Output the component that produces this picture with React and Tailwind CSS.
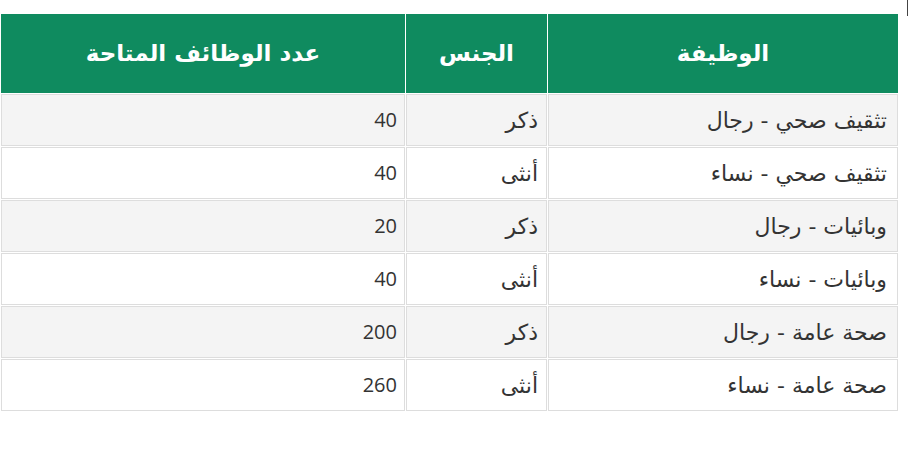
import React from "react";

const rows = [
  { job: "تثقيف صحي - رجال", gender: "ذكر", count: 40 },
  { job: "تثقيف صحي - نساء", gender: "أنثى", count: 40 },
  { job: "وبائيات - رجال", gender: "ذكر", count: 20 },
  { job: "وبائيات - نساء", gender: "أنثى", count: 40 },
  { job: "صحة عامة - رجال", gender: "ذكر", count: 200 },
  { job: "صحة عامة - نساء", gender: "أنثى", count: 260 },
];

const arabic = { fontFamily: '"DejaVu Sans", "Open Sans", sans-serif' };

export default function App() {
  return (
    <div
      className="relative w-[908px] h-[449px] bg-white pt-[13px]"
      style={{ fontFamily: '"Open Sans", "DejaVu Sans", sans-serif' }}
    >
      <div className="absolute right-0 top-0 w-px h-[16px] bg-[#444]" />
      <table dir="rtl" className="w-[899px] table-fixed border-separate border-spacing-px">
        <colgroup>
          <col className="w-[350px]" />
          <col className="w-[141px]" />
          <col className="w-[404px]" />
        </colgroup>
        <thead>
          <tr style={arabic}>
            <th className="h-[79px] bg-[#0f8b5f] text-white text-[23px] font-bold text-center">الوظيفة</th>
            <th className="h-[79px] bg-[#0f8b5f] text-white text-[23px] font-bold text-center">الجنس</th>
            <th className="h-[79px] bg-[#0f8b5f] text-white text-[23px] font-bold text-center">عدد الوظائف المتاحة</th>
          </tr>
        </thead>
        <tbody>
          {rows.map((r, i) => (
            <tr key={i} className={i % 2 === 0 ? "bg-[#f4f4f4]" : "bg-white"}>
              <td style={arabic} className="h-[52px] border border-[#dddddd] px-[10px] text-right text-[22px] text-[#333]">{r.job}</td>
              <td style={arabic} className="h-[52px] border border-[#dddddd] px-[8px] text-right text-[22px] text-[#333]">{r.gender}</td>
              <td className="h-[52px] border border-[#dddddd] px-[7px] text-right text-[20px] text-[#333]">{r.count}</td>
            </tr>
          ))}
        </tbody>
      </table>
    </div>
  );
}
